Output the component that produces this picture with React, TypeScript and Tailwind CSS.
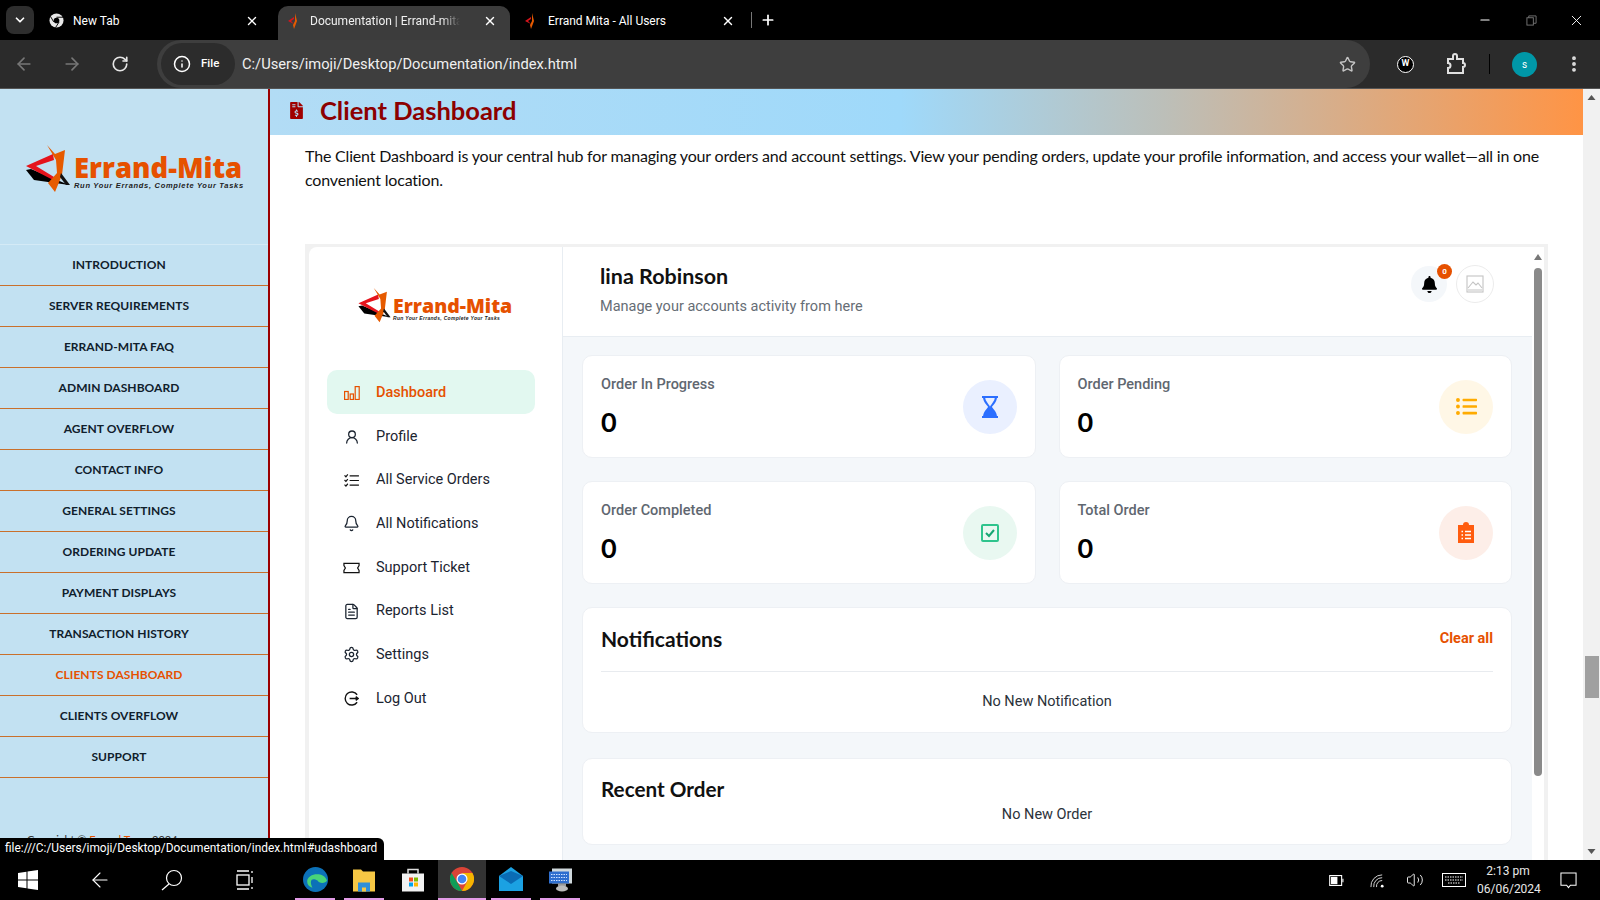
import {
  ArrowLeft,
  ArrowRight,
  Bell,
  ChevronDown,
  FileText,
  Info,
  Minus,
  MoreVertical,
  Plus,
  RotateCw,
  Settings,
  Star,
  UserRound,
  Volume2,
  X,
} from "lucide-react";
import { FaBell, FaFileInvoiceDollar, FaListUl } from "react-icons/fa";

const docFont = "font-['Lato','Noto_Sans',sans-serif]";

const docLinks = [
  "Introduction",
  "Server Requirements",
  "Errand-Mita FAQ",
  "Admin Dashboard",
  "Agent Overflow",
  "Contact Info",
  "General Settings",
  "Ordering Update",
  "Payment Displays",
  "Transaction History",
  "Clients Dashboard",
  "Clients Overflow",
  "Support",
];

function LogoMark({ className }: { className: string }) {
  return (
    <svg viewBox="0 0 44 48" className={className}>
      <path d="M0 25 L5 24 L43 40 L8 35 Z" fill="#000" />
      <path d="M0 21 L27 9 L28 15 L10 21 L28 32 L29 36 Z" fill="#e5141c" />
      <path d="M21 0 L29 9 L39 5 L36 30 L29 47 L22 38 L31 28 L30 15 Z" fill="#e65a00" />
      <path d="M35 28 L44 40 L40 40 L34 32 Z" fill="#111" />
    </svg>
  );
}

function Logo({ small }: { small?: boolean }) {
  return (
    <div className={`flex items-center ${small ? "gap-[2px]" : "gap-[4px]"}`}>
      <LogoMark className={small ? "h-[35px] w-[33px]" : "h-[48px] w-[44px]"} />
      <div className={`flex flex-col ${small ? "mt-[4px]" : "mt-[6px]"}`}>
        <span
          className={`font-['Open_Sans',sans-serif] font-extrabold whitespace-nowrap text-[#e65100] ${
            small ? "text-[19.5px] leading-[21px]" : "text-[27.5px] leading-[28px]"
          }`}
        >
          Errand-Mita
        </span>
        <span
          className={`font-['Liberation_Sans',sans-serif] font-bold italic whitespace-nowrap text-[#222] ${
            small ? "text-[5px] leading-[5px] tracking-[0.3px]" : "text-[7.5px] leading-[8px] tracking-[0.7px]"
          }`}
        >
          Run Your Errands, Complete Your Tasks
        </span>
      </div>
    </div>
  );
}

function Favicon() {
  return (
    <svg viewBox="0 0 12 16" className="h-4 w-3 shrink-0">
      <path d="M7 0 L9 8 L6 16 L5 12 L7 8 Z" fill="#e65a00" />
      <path d="M0 8 L6 4 L6 6 L3 8 L6 11 Z" fill="#d8141c" />
    </svg>
  );
}

function TabStrip() {
  return (
    <div className="h-[40px] bg-black flex items-end text-white font-['Roboto',sans-serif] text-[12px] shrink-0">
      <div className="ml-[6px] mb-[6px] w-[28px] h-[28px] rounded-lg bg-[#2e2e2e] flex items-center justify-center">
        <ChevronDown size={14} strokeWidth={3} />
      </div>
      <div className="w-[244px] h-[34px] flex items-center pl-[14px] pr-[19px] pb-[5px]">
        <svg viewBox="0 0 16 16" className="ml-[1px] w-[15px] h-[15px] shrink-0">
          <circle cx="8" cy="8" r="7.5" fill="#e8e8e8" />
          <circle cx="8" cy="8" r="3" fill="#000" />
          <path d="M8 4.5 H15 M5 9.5 L1.8 4 M10.8 9.5 L7 15.5" stroke="#000" strokeWidth="1" />
        </svg>
        <span className="ml-[9px] flex-1">New Tab</span>
        <X size={14} strokeWidth={2.4} />
      </div>
      <div className="w-[232px] h-[34px] bg-[#3c3c3c] rounded-t-[10px] flex items-center pl-[10px] pr-[13px] pb-[5px]">
        <Favicon />
        <span className="ml-[10px] w-[150px] overflow-hidden whitespace-nowrap text-[#f0f0f0] [mask-image:linear-gradient(to_right,black_88%,transparent)]">
          Documentation | Errand-mita
        </span>
        <span className="flex-1" />
        <X size={14} strokeWidth={2.4} />
      </div>
      <div className="w-[227px] h-[34px] flex items-center pl-[15px] pr-[2px] pb-[5px]">
        <Favicon />
        <span className="ml-[11px] flex-1">Errand Mita - All Users</span>
        <X size={14} strokeWidth={2.4} />
      </div>
      <div className="w-px h-[16px] bg-[#777] mb-[12px] ml-[14px]" />
      <Plus size={16} strokeWidth={2.6} className="ml-[8px] mb-[12px]" />
      <div className="ml-auto h-[40px] flex items-center">
        <Minus size={14} className="mr-[34px]" />
        <svg viewBox="0 0 12 12" className="w-[11px] h-[11px] mr-[31px]" fill="none" stroke="#777">
          <rect x="1" y="3" width="7" height="8" />
          <path d="M3 3 V1 H11 V9 H8" />
        </svg>
        <X size={17} strokeWidth={1.3} className="mr-[15px]" />
      </div>
    </div>
  );
}

function Toolbar() {
  return (
    <div className="h-[49px] bg-[#2b2b2b] border-b border-[#555] flex items-center text-white font-['Roboto',sans-serif] shrink-0">
      <ArrowLeft size={20} className="ml-[14px] text-[#777]" />
      <ArrowRight size={20} className="ml-[28px] text-[#777]" />
      <RotateCw size={18} strokeWidth={2.2} className="ml-[29px] text-[#e6e6e6]" />
      <div className="ml-[28px] h-[48px] w-[1213px] bg-[#3e3e3e] rounded-full flex items-center pl-[4px] pr-[14px]">
        <div className="h-[42px] w-[74px] rounded-full bg-[#2c2c2c] flex items-center pl-[12px]">
          <Info size={18} strokeWidth={2} />
          <span className="ml-[10px] text-[11.5px] font-medium">File</span>
        </div>
        <span className="ml-[7px] text-[14.7px] text-[#f0f0f0] flex-1">C:/Users/imoji/Desktop/Documentation/index.html</span>
        <Star size={17} strokeWidth={2} className="text-[#c4c4c4]" />
      </div>
      <div className="ml-[27px] w-[17px] h-[17px] rounded-full bg-black border border-white flex items-center justify-center text-[9px] font-bold">
        W
      </div>
      <svg viewBox="0 0 24 24" className="ml-[30px] w-[24px] h-[24px]" fill="none" stroke="#e0e0e0" strokeWidth="2">
        <path d="M4 7 H9 V4 a2 2 0 0 1 4 0 V7 H19 V11 a2 2 0 0 1 0 4 V21 H4 V16 a2.500 2.500 0 0 0 0 -5 Z" />
      </svg>
      <div className="ml-[21px] w-px h-[20px] bg-black" />
      <div className="ml-[22px] w-[25px] h-[25px] rounded-full bg-[#0097a7] flex items-center justify-center text-[10px]">s</div>
      <MoreVertical size={20} strokeWidth={2.6} className="ml-[27px] text-[#e0e0e0]" />
    </div>
  );
}

function DocSidebar() {
  return (
    <aside className={`w-[270px] shrink-0 bg-[#c2e1f2] border-r-[2px] border-[#9b0000] flex flex-col ${docFont}`}>
      <div className="h-[156px] flex items-center pl-[26px] border-b border-[#d4eaf6]">
        <div className="mt-[4px]">
          <Logo />
        </div>
      </div>
      {docLinks.map((label) => (
        <div
          key={label}
          className={`h-[41px] shrink-0 border-b border-[#c9702c] flex items-center justify-center pr-[30px] text-[12px] font-bold uppercase tracking-[0.05px] ${
            label === "Clients Dashboard" ? "text-[#e65100]" : "text-[#10202c]"
          }`}
        >
          {label}
        </div>
      ))}
      <p className="mt-[54px] ml-[27px] text-[11px] text-[#333]">
        Copyright © <span className="text-[#e65100]">Errand Team</span> 2024
      </p>
    </aside>
  );
}

const barsIcon = (
  <svg viewBox="0 0 16 14" className="w-[16px] h-[14px]" fill="none" stroke="#e65100" strokeWidth="1.2">
    <rect x="0.600" y="5.500" width="3.600" height="8" />
    <rect x="6.200" y="8" width="3.200" height="5.500" />
    <rect x="11.200" y="0.600" width="4" height="12.900" />
  </svg>
);

const checksIcon = (
  <svg viewBox="0 0 16 14" className="w-[15px] h-[13px]" fill="none" stroke="#111" strokeWidth="1.300">
    <path d="M6 2 H16 M6 7 H16 M6 12 H16" />
    <path d="M0.500 1.500 L2 3 L4 0.500 M0.500 6.500 L2 8 L4 5.500 M0.500 11.500 L2 13 L4 10.500" />
  </svg>
);

const ticketIcon = (
  <svg viewBox="0 0 18 12" className="w-[17px] h-[12px]" fill="none" stroke="#111" strokeWidth="1.300">
    <path d="M1 1 H17 V3.500 L15.500 6 L17 8.500 V11 H1 V8.500 L2.500 6 L1 3.500 Z" />
  </svg>
);

const logoutIcon = (
  <svg viewBox="0 0 16 16" className="w-[15px] h-[15px]" fill="none" stroke="#111" strokeWidth="1.500">
    <path d="M14 4 A7 7 0 1 0 14 12 M6 8 H15 M12.500 6 L15 8 L12.500 10" />
  </svg>
);

const menu = [
  { label: "Dashboard", icon: barsIcon, active: true },
  { label: "Profile", icon: <UserRound size={16} strokeWidth={1.9} /> },
  { label: "All Service Orders", icon: checksIcon },
  { label: "All Notifications", icon: <Bell size={17} strokeWidth={1.8} /> },
  { label: "Support Ticket", icon: ticketIcon },
  { label: "Reports List", icon: <FileText size={17} strokeWidth={1.8} /> },
  { label: "Settings", icon: <Settings size={17} strokeWidth={1.8} /> },
  { label: "Log Out", icon: logoutIcon },
];

function InnerSidebar() {
  return (
    <div className="w-[254px] shrink-0 bg-white border-r border-[#e8edf2] rounded-tl-lg pl-[18px] font-['Roboto',sans-serif]">
      <div className="h-[123px] pl-[31px] pt-[41px]">
        <Logo small />
      </div>
      <div className="w-[208px] flex flex-col">
        {menu.map((m) => (
          <div
            key={m.label}
            className={`h-[43.7px] flex items-center pt-[2px] rounded-[10px] text-[14.500px] ${
              m.active ? "bg-[#e2f8f0] text-[#e65100] font-medium" : "text-[#1b2430]"
            }`}
          >
            <span className="w-[49px] flex justify-center">{m.icon}</span>
            {m.label}
          </div>
        ))}
      </div>
    </div>
  );
}

function StatCard({
  label,
  circle,
  icon,
}: {
  label: string;
  circle: string;
  icon: React.ReactNode;
}) {
  return (
    <div className="h-[103px] bg-white rounded-[10px] border border-[#edf0f4] flex items-center justify-between pl-[18px] pr-[18px]">
      <div className="pt-[2px]">
        <p className="text-[14.500px] leading-[20px] font-medium text-[#5f6770]">{label}</p>
        <p className="mt-[9px] text-[27px] leading-[36px] font-bold text-black font-['Lato',sans-serif]">0</p>
      </div>
      <div className={`w-[54px] h-[54px] rounded-full flex items-center justify-center ${circle}`}>{icon}</div>
    </div>
  );
}

function InnerMain() {
  return (
    <div className="flex-1 min-w-0 bg-[#f4f7fa] font-['Roboto',sans-serif]">
      <header className="h-[90px] bg-white border-b border-[#e8edf2] flex items-start pl-[37px] pr-[38px]">
        <div className="pt-[17px]">
          <h2 className={`text-[21.500px] leading-[25px] font-bold text-[#111] ${docFont}`}>lina Robinson</h2>
          <p className="mt-[8px] text-[14.500px] leading-[20px] text-[#666d75]">Manage your accounts activity from here</p>
        </div>
        <div className="ml-auto mt-[18px] flex items-center gap-[9px]">
          <div className="relative w-[36px] h-[36px] rounded-full bg-[#f4f7fa] flex items-center justify-center">
            <FaBell size={17} className="text-black" />
            <span className="absolute -top-[2px] -right-[5px] w-[15px] h-[15px] rounded-full bg-[#e65100] text-white text-[8px] font-bold flex items-center justify-center">
              0
            </span>
          </div>
          <div className="w-[38px] h-[38px] rounded-full border border-[#ececec] bg-white flex items-center justify-center">
            <svg viewBox="0 0 18 18" className="w-[18px] h-[18px]" fill="none" stroke="#c4c4c4" strokeWidth="1.100">
              <rect x="1" y="1" width="16" height="16" />
              <path d="M2 13 L7 7 L10 10 L12 8 L16 13 M2 15 H16" />
            </svg>
          </div>
        </div>
      </header>
      <div className="pt-[18px] pl-[19px] pr-[20px] flex flex-col">
        <div className="grid grid-cols-2 gap-x-[23px] gap-y-[23px]">
          <StatCard
            label="Order In Progress"
            circle="bg-[#eaf0ff]"
            icon={
              <svg viewBox="0 0 16 22" className="w-[16px] h-[22px]" fill="none" stroke="#2c6fff" strokeWidth="2">
                <path d="M0 1 H16 M0 21 H16" />
                <path d="M2 1 C2 7 7 9 7 11 C7 13 2 15 2 21 H14 C14 15 9 13 9 11 C9 9 14 7 14 1" />
                <path d="M3 21 C3 16 7 14 8 12 C9 14 13 16 13 21 Z" fill="#2c6fff" />
              </svg>
            }
          />
          <StatCard label="Order Pending" circle="bg-[#fff7e6]" icon={<FaListUl size={21} className="text-[#ffab00]" />} />
          <StatCard
            label="Order Completed"
            circle="bg-[#e9f8f1]"
            icon={
              <svg viewBox="0 0 20 20" className="w-[20px] h-[20px]" fill="none" stroke="#2fc48d" strokeWidth="2">
                <rect x="2" y="2" width="16" height="16" rx="1" />
                <path d="M6 10 L9 13 L14 7" stroke="#17a673" />
              </svg>
            }
          />
          <StatCard
            label="Total Order"
            circle="bg-[#fdeee8]"
            icon={
              <svg viewBox="0 0 18 22" className="w-[18px] h-[22px]">
                <path d="M1 3 H6 a3 3 0 0 1 6 0 H17 V21 H1 Z" fill="#ff5c0f" />
                <path d="M4.500 9.500 H6 M8 9.500 H14 M4.500 13 H6 M8 13 H14 M4.500 16.500 H6 M8 16.500 H14" stroke="#fff" strokeWidth="1.500" />
              </svg>
            }
          />
        </div>
        <section className="mt-[23px] h-[126px] bg-white rounded-[10px] border border-[#edf0f4] px-[18px]">
          <div className="h-[64px] pb-[2px] border-b border-[#e8ebef] flex items-center justify-between">
            <h3 className={`text-[21px] font-bold text-[#111] ${docFont}`}>Notifications</h3>
            <span className="text-[14.500px] font-bold text-[#e65100]">Clear all</span>
          </div>
          <p className="mt-[20px] text-center text-[14.500px] leading-[20px] text-[#2b323a]">No New Notification</p>
        </section>
        <section className="mt-[25px] h-[87px] bg-white rounded-[10px] border border-[#edf0f4] px-[18px]">
          <h3 className={`pt-[18px] text-[20.700px] leading-[25px] font-bold text-[#111] ${docFont}`}>Recent Order</h3>
          <p className="mt-[3px] text-center text-[14.500px] leading-[20px] text-[#2b323a]">No New Order</p>
        </section>
      </div>
    </div>
  );
}

function Embedded() {
  return (
    <div className="ml-[35px] mt-[53px] w-[1243px] flex-1 min-h-0 bg-[#f1f1f1] pt-[3px] pl-[4px] pr-[4px] overflow-hidden">
      <div className="flex h-full overflow-hidden">
        <InnerSidebar />
        <InnerMain />
        <div className="w-[12px] shrink-0 bg-white flex flex-col items-center pt-[7px]">
          <svg viewBox="0 0 8 6" className="w-[8px] h-[6px]">
            <path d="M4 0 L8 6 H0 Z" fill="#777" />
          </svg>
          <div className="mt-[8px] w-[8px] h-[508px] rounded-full bg-[#8a8a8a]" />
        </div>
      </div>
    </div>
  );
}

function DocMain() {
  return (
    <main className={`flex-1 min-w-0 flex flex-col bg-white ${docFont}`}>
      <div className="h-[46px] shrink-0 flex items-center pl-[18px] pb-[3px] bg-[linear-gradient(to_right,#b2dcf5_0%,#9fd9fa_48%,#bcbfb9_68%,#ff9445_100%)]">
        <FaFileInvoiceDollar size={17} className="text-[#a00000]" />
        <h1 className="ml-[15px] text-[25.500px] font-bold text-[#8c0000]">Client Dashboard</h1>
      </div>
      <p className="mt-[9px] px-[35px] text-[16px] leading-[23.500px] tracking-[-0.18px] text-[#111] font-normal">
        The Client Dashboard is your central hub for managing your orders and account settings. View your pending orders,
        update your profile information, and access your wallet—all in one convenient location.
      </p>
      <Embedded />
    </main>
  );
}

function PageScrollbar() {
  return (
    <div className="w-[17px] shrink-0 bg-[#f1f1f1] flex flex-col items-center pt-[6px] pb-[6px]">
      <svg viewBox="0 0 8 5" className="w-[9px] h-[5px]">
        <path d="M4 0 L8 5 H0 Z" fill="#555" />
      </svg>
      <div className="mt-[556px] w-[14px] h-[42px] bg-[#a0a0a0]" />
      <svg viewBox="0 0 8 5" className="mt-auto w-[9px] h-[5px]">
        <path d="M0 0 H8 L4 5 Z" fill="#555" />
      </svg>
    </div>
  );
}

function TaskApp({ children, width, running, active }: { children: React.ReactNode; width: string; running?: boolean; active?: boolean }) {
  return (
    <div className={`h-[40px] flex items-center justify-center border-b-[2px] ${width} ${running ? "border-[#e29be6]" : "border-transparent"} ${active ? "bg-[#333]" : ""}`}>
      {children}
    </div>
  );
}

function Taskbar() {
  return (
    <div className="h-[40px] bg-black flex items-center text-white font-['Roboto',sans-serif] shrink-0">
      <svg viewBox="0 0 20 20" className="ml-[18px] w-[20px] h-[20px]" fill="#fff">
        <path d="M0 3 L8.500 1.800 V9.500 H0 Z M9.500 1.600 L20 0 V9.500 H9.500 Z M0 10.500 H8.500 V18.200 L0 17 Z M9.500 10.500 H20 V20 L9.500 18.400 Z" />
      </svg>
      <ArrowLeft size={24} strokeWidth={1.1} className="ml-[50px]" />
      <svg viewBox="0 0 22 22" className="ml-[49px] w-[22px] h-[22px]" fill="none" stroke="#fff" strokeWidth="1.200">
        <circle cx="13" cy="9" r="7.500" />
        <path d="M8 15 L1 21" />
      </svg>
      <svg viewBox="0 0 20 20" className="ml-[53px] w-[20px] h-[20px]" fill="none" stroke="#fff" strokeWidth="1.300">
        <path d="M1 1 H13 M1 19 H13 M16 1 V3 M16 7 V13 M16 17 V19" />
        <rect x="1" y="5" width="12" height="10" />
      </svg>
      <div className="ml-[39px] flex items-center gap-[9px]">
        <TaskApp width="w-[40px]" running>
          <svg viewBox="0 0 24 24" className="w-[25px] h-[25px]">
            <circle cx="12" cy="12" r="12" fill="#0c71b8" />
            <path d="M4 14 C4 6 20 4 23 13 C22 16 15 16 14 13 C8 10 6 13 9 20 C6 19 4 17 4 14 Z" fill="#48d47a" />
          </svg>
        </TaskApp>
        <TaskApp width="w-[40px]" running>
          <svg viewBox="0 0 22 24" className="w-[22px] h-[25px]">
            <path d="M0 2 H8 L10 4 H22 V24 H0 Z" fill="#f6c744" />
            <rect x="5" y="15" width="12" height="9" fill="#2f8fd8" />
            <rect x="9" y="20" width="4" height="4" fill="#f6c744" />
          </svg>
        </TaskApp>
        <TaskApp width="w-[40px]">
          <svg viewBox="0 0 24 24" className="w-[24px] h-[25px]">
            <path d="M7 6 V2 H17 V6" fill="none" stroke="#ddd" strokeWidth="1.500" />
            <rect x="1" y="6" width="22" height="18" fill="#f2f2f2" />
            <rect x="8" y="10" width="4" height="4" fill="#f25022" />
            <rect x="13" y="10" width="4" height="4" fill="#7fba00" />
            <rect x="8" y="15" width="4" height="4" fill="#00a4ef" />
            <rect x="13" y="15" width="4" height="4" fill="#ffb900" />
          </svg>
        </TaskApp>
        <div className="-mx-[4px]">
          <TaskApp width="w-[48px]" running active>
            <svg viewBox="0 0 24 24" className="w-[24px] h-[24px]">
              <circle cx="12" cy="12" r="12" fill="#db4437" />
              <path d="M12 24 A12 12 0 0 1 1.600 6 L7 15 L12 24 Z" fill="#0f9d58" />
              <path d="M12 24 L17.500 14 L12 6 H22.400 A12 12 0 0 1 12 24 Z" fill="#f4b400" />
              <circle cx="12" cy="12" r="5.500" fill="#fff" />
              <circle cx="12" cy="12" r="4.300" fill="#4285f4" />
            </svg>
          </TaskApp>
        </div>
        <TaskApp width="w-[40px]" running>
          <svg viewBox="0 0 24 24" className="w-[24px] h-[24px]">
            <path d="M0 9 L12 0 L24 9 V24 H0 Z" fill="#1ba1e2" />
            <path d="M0 9 L12 17 L24 9 L12 4 Z" fill="#0a6cb5" />
          </svg>
        </TaskApp>
        <TaskApp width="w-[40px]" running>
          <svg viewBox="0 0 24 24" className="w-[24px] h-[25px]">
            <rect x="4" y="1" width="20" height="15" fill="#cfd8dc" />
            <rect x="1" y="4" width="20" height="12" fill="#2f6fcf" />
            <path d="M3 7 H19 M3 10 H19 M3 13 H19" stroke="#cfe2ff" strokeDasharray="1.500 1" />
            <rect x="10" y="16" width="8" height="3" fill="#999" />
            <ellipse cx="14" cy="21" rx="6" ry="3" fill="#bbb" />
          </svg>
        </TaskApp>
      </div>
      <div className="ml-auto flex items-center">
        <svg viewBox="0 0 16 12" className="w-[15px] h-[11px]" fill="none" stroke="#fff" strokeWidth="1.200">
          <rect x="0.600" y="0.600" width="13" height="10.800" />
          <rect x="2" y="2" width="7" height="8" fill="#fff" stroke="none" />
          <path d="M15 4 V8" />
        </svg>
        <svg viewBox="0 0 16 16" className="ml-[26px] w-[15px] h-[15px]" fill="none" stroke="#ddd" strokeWidth="1">
          <path d="M1 15 A12 12 0 0 1 13 2 M4 15 A9 9 0 0 1 13 5 M7 15 A6 6 0 0 1 13 8" />
          <circle cx="13" cy="14" r="1.500" fill="#fff" stroke="none" />
        </svg>
        <Volume2 size={18} strokeWidth={1.200} className="ml-[21px]" />
        <svg viewBox="0 0 24 14" className="ml-[18px] w-[24px] h-[14px]" fill="none" stroke="#fff" strokeWidth="1">
          <rect x="0.500" y="0.500" width="23" height="13" />
          <path d="M3 4 H21 M3 7 H21 M6 10 H18" strokeDasharray="1.500 1" />
        </svg>
        <div className="ml-[11px] w-[62px] text-center text-[12px] leading-[18px] text-[#e8e8e8]">
          <div>2:13 pm</div>
          <div>06/06/2024</div>
        </div>
        <svg viewBox="0 0 18 18" className="ml-[21px] mr-[23px] w-[17px] h-[17px]" fill="none" stroke="#fff" strokeWidth="1.100">
          <path d="M1 1 H17 V14 H11 L9 16.500 L7 14 H1 Z" />
        </svg>
      </div>
    </div>
  );
}

export default function App() {
  return (
    <div className="relative w-[1600px] h-[900px] flex flex-col overflow-hidden bg-black">
      <TabStrip />
      <Toolbar />
      <div className="flex-1 min-h-0 flex overflow-hidden">
        <DocSidebar />
        <DocMain />
        <PageScrollbar />
      </div>
      <Taskbar />
      <div className="absolute left-0 bottom-[40px] h-[22px] w-[384px] bg-black rounded-tr-md pl-[5px] flex items-center whitespace-nowrap text-white text-[11.900px] font-['Roboto',sans-serif]">
        file:///C:/Users/imoji/Desktop/Documentation/index.html#udashboard
      </div>
    </div>
  );
}
